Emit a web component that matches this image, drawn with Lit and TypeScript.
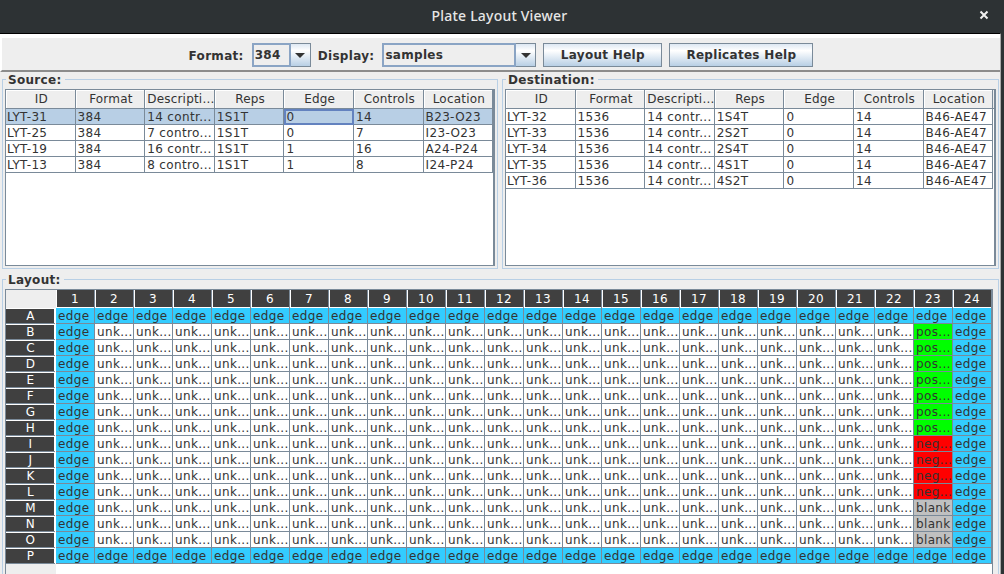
import { LitElement, html, css } from "lit";
import { customElement } from "lit/decorators.js";

const COLUMNS = ["ID", "Format", "Descripti...", "Reps", "Edge", "Controls", "Location"];

const SOURCE = [
  ["LYT-31", "384", "14 contr...", "1S1T", "0", "14", "B23-O23"],
  ["LYT-25", "384", "7 contro...", "1S1T", "0", "7", "I23-O23"],
  ["LYT-19", "384", "16 contr...", "1S1T", "1", "16", "A24-P24"],
  ["LYT-13", "384", "8 contro...", "1S1T", "1", "8", "I24-P24"],
];

const DESTINATION = [
  ["LYT-32", "1536", "14 contr...", "1S4T", "0", "14", "B46-AE47"],
  ["LYT-33", "1536", "14 contr...", "2S2T", "0", "14", "B46-AE47"],
  ["LYT-34", "1536", "14 contr...", "2S4T", "0", "14", "B46-AE47"],
  ["LYT-35", "1536", "14 contr...", "4S1T", "0", "14", "B46-AE47"],
  ["LYT-36", "1536", "14 contr...", "4S2T", "0", "14", "B46-AE47"],
];

const ROWS = "ABCDEFGHIJKLMNOP".split("");

function wellType(row: number, col: number): string {
  if (row === 0 || row === 15 || col === 0 || col === 23) return "edge";
  if (col === 22) {
    if (row <= 7) return "pos";
    if (row <= 11) return "neg";
    return "blank";
  }
  return "unk";
}

const WELL_LABEL: Record<string, string> = {
  edge: "edge",
  pos: "pos...",
  neg: "neg...",
  blank: "blank",
  unk: "unk...",
};

@customElement("data-table")
class DataTable extends LitElement {
  static properties = {
    rows: { attribute: false },
    selected: { type: Number },
  };

  rows: string[][] = [];
  selected = -1;

  static styles = css`
    :host {
      display: block;
      height: 177px;
      background: #fff;
      border: 1px solid #7a8a99;
      border-right-width: 2px;
      box-sizing: border-box;
      font: 12px "DejaVu Sans", sans-serif;
      letter-spacing: 0.35px;
      color: #333;
      overflow: hidden;
    }
    .row {
      display: grid;
      grid-template-columns: repeat(7, 69.6px);
      height: 16px;
    }
    .head {
      height: 19px;
      background: #eee;
      border-bottom: 1px solid #7a8a99;
      box-sizing: border-box;
    }
    .c {
      box-sizing: border-box;
      border-right: 1px solid #7a8a99;
      border-bottom: 1px solid #7a8a99;
      padding: 1px 0 0 2px;
      line-height: 15px;
      white-space: nowrap;
      overflow: hidden;
    }
    .c:first-child {
      padding-left: 1px;
    }
    .head .c {
      text-align: center;
      padding: 1px 0 0 2px;
      border-bottom: 0;
      line-height: 17px;
      letter-spacing: 0.2px;
      box-shadow: inset 1px 1px 0 #fff;
    }
    .selected {
      background: #b8cfe5;
    }
    .focus {
      outline: 2px solid #6382bf;
      outline-offset: -2px;
    }
  `;

  render() {
    return html`
      <div class="row head">${COLUMNS.map((c) => html`<div class="c">${c}</div>`)}</div>
      ${this.rows.map(
        (r, i) => html`<div class="row ${i === this.selected ? "selected" : ""}">
          ${r.map(
            (v, j) =>
              html`<div class="c ${i === this.selected && j === 4 ? "focus" : ""}">${v}</div>`
          )}
        </div>`
      )}
    `;
  }
}

@customElement("plate-grid")
class PlateGrid extends LitElement {
  static styles = css`
    :host {
      display: grid;
      grid-template-columns: 50px repeat(24, 39px);
      grid-template-rows: 18px repeat(16, 16px) 20px;
      width: 988px;
      box-sizing: border-box;
      font: 12px "DejaVu Sans", sans-serif;
      letter-spacing: 0.35px;
      color: #333;
      background: #fff;
      border: 1px solid #7a8a99;
      border-width: 1px 1px 0 1px;
    }
    .corner {
      background: #eee;
    }
    .col {
      box-sizing: border-box;
      background: #404040;
      color: #fff;
      text-align: center;
      line-height: 19px;
      border-right: 1px solid #7a8a99;
      box-shadow: inset 1px -1px 0 #fff;
    }
    .rowhead {
      box-sizing: border-box;
      background: #404040;
      color: #fff;
      text-align: center;
      line-height: 16px;
      margin-right: 1px;
      border-bottom: 1px solid #7a8a99;
      box-shadow: inset -1px 1px 0 #fff;
    }
    .well {
      box-sizing: border-box;
      border-right: 1px solid #7a8a99;
      border-bottom: 1px solid #7a8a99;
      padding: 1px 0 0 2px;
      line-height: 15px;
      white-space: nowrap;
      overflow: hidden;
    }
    .edge { background: #33ccff; }
    .pos { background: #00ff00; }
    .neg { background: #ff0000; }
    .blank { background: #c0c0c0; }
    .unk { background: #fff; }
    .rest { grid-column: 2 / -1; }
  `;

  render() {
    return html`
      <div class="corner"></div>
      ${Array.from({ length: 24 }, (_, i) => html`<div class="col">${i + 1}</div>`)}
      ${ROWS.map(
        (r, ri) => html`
          <div class="rowhead">${r}</div>
          ${Array.from({ length: 24 }, (_, c) => {
            const t = wellType(ri, c);
            return html`<div class="well ${t}">${WELL_LABEL[t]}</div>`;
          })}
        `
      )}
      <div class="corner"></div>
      <div class="rest"></div>
    `;
  }
}

@customElement("app-root")
class AppRoot extends LitElement {
  static styles = css`
    :host {
      display: block;
      width: 1004px;
      height: 574px;
      overflow: hidden;
      background: #2d3234;
      font: bold 12px "DejaVu Sans", sans-serif;
      letter-spacing: 0.3px;
      color: #333;
    }
    .titlebar {
      height: 33px;
      box-sizing: border-box;
      padding: 0 5px 3px 0;
      background: #2d3234;
      display: flex;
      align-items: center;
      justify-content: center;
      position: relative;
      color: #e6e6e6;
      font: 500 14px "Noto Sans", sans-serif;
      letter-spacing: 0.2px;
    }
    .close {
      position: absolute;
      left: 978px;
      top: 9px;
      width: 12px;
      height: 12px;
    }
    .body {
      width: 1001px;
      height: 541px;
      box-sizing: border-box;
      background: #eee;
      border-top: 1px solid #000;
      border-right: 1px solid #aaa;
    }
    .toolbar {
      height: 38px;
      box-sizing: border-box;
      display: flex;
      justify-content: center;
      align-items: center;
      gap: 7px;
      border-style: solid;
      border-color: #fff #8c8c8c #8c8c8c #fff;
      border-width: 4px 0 2px 2px;
      padding-top: 2px;
    }
    .label {
      margin-right: 1px;
      padding-top: 2px;
    }
    .combo {
      display: flex;
      height: 24px;
      box-sizing: border-box;
    }
    .format { width: 59px; }
    .display { width: 154px; }
    .field {
      flex: 1;
      display: flex;
      align-items: center;
      border: 2px solid #8aa4c4;
      background: #eee;
      box-sizing: border-box;
      padding: 0 0 0 1px;
    }
    .arrow {
      width: 20px;
      box-sizing: border-box;
      border: 1px solid #7a8a99;
      border-left: 0;
      background: linear-gradient(#dde8f3, #fff 30%, #b8cfe5);
      display: flex;
      align-items: center;
      justify-content: center;
    }
    .arrow i {
      border: 5px solid transparent;
      border-top: 5px solid #333;
      border-bottom: 0;
    }
    button {
      height: 24px;
      border: 1px solid #7a8a99;
      background: linear-gradient(#dde8f3, #fff 30%, #b8cfe5);
      font: inherit;
      color: inherit;
      letter-spacing: inherit;
      padding: 0;
    }
    .layout-help { width: 119px; }
    .replicates-help { width: 144px; }
    .panels {
      display: grid;
      grid-template-columns: 496px 497px;
      gap: 4px;
      margin-left: 2px;
    }
    fieldset {
      margin: 0;
      padding: 2px 2px 2px;
      border: 1px solid #b8cfe5;
      min-width: 0;
    }
    legend {
      padding: 2px 3px 0 2px;
      margin-left: 1px;
      line-height: 13px;
    }
    .layout {
      margin: 3px 0 0 2px;
      width: 997px;
      box-sizing: border-box;
      height: 310px;
    }
  `;

  render() {
    return html`
      <div class="titlebar">
        Plate Layout Viewer
        <svg class="close" viewBox="0 0 12 12">
          <path d="M2.5 2.5l7 7M9.5 2.5l-7 7" stroke="#f0f0f0" stroke-width="2" fill="none" />
        </svg>
      </div>
      <div class="body">
        <div class="toolbar">
          <span class="label">Format:</span>
          <div class="combo format">
            <div class="field">384</div>
            <div class="arrow"><i></i></div>
          </div>
          <span class="label">Display:</span>
          <div class="combo display">
            <div class="field">samples</div>
            <div class="arrow"><i></i></div>
          </div>
          <button class="layout-help">Layout Help</button>
          <button class="replicates-help">Replicates Help</button>
        </div>
        <div class="panels">
          <fieldset>
            <legend>Source:</legend>
            <data-table .rows=${SOURCE} selected="0"></data-table>
          </fieldset>
          <fieldset>
            <legend>Destination:</legend>
            <data-table .rows=${DESTINATION}></data-table>
          </fieldset>
        </div>
        <fieldset class="layout">
          <legend>Layout:</legend>
          <plate-grid></plate-grid>
        </fieldset>
      </div>
    `;
  }
}
